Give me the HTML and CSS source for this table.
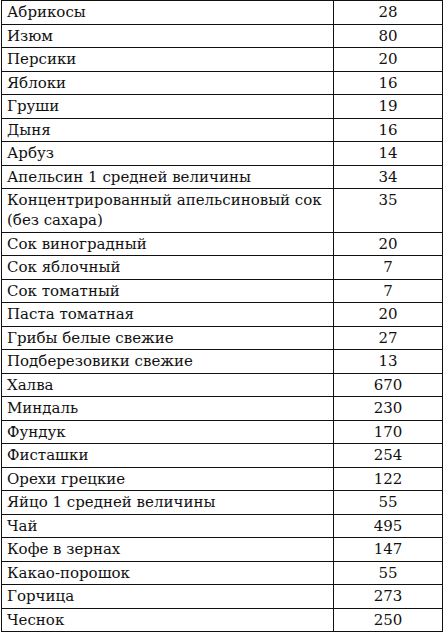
FILE: index.html
```html
<!DOCTYPE html>
<html lang="ru">
<head>
<meta charset="utf-8">
<link rel="stylesheet" href="styles.css">
</head>
<body>
<table class="tbl">
<tbody>
<tr><td class="name">Абрикосы</td><td class="val">28</td></tr>
<tr><td class="name">Изюм</td><td class="val">80</td></tr>
<tr><td class="name">Персики</td><td class="val">20</td></tr>
<tr><td class="name">Яблоки</td><td class="val">16</td></tr>
<tr><td class="name">Груши</td><td class="val">19</td></tr>
<tr><td class="name">Дыня</td><td class="val">16</td></tr>
<tr><td class="name">Арбуз</td><td class="val">14</td></tr>
<tr><td class="name">Апельсин 1 средней величины</td><td class="val">34</td></tr>
<tr><td class="name"><span class="line">Концентрированный апельсиновый сок</span><br>(без сахара)</td><td class="val">35</td></tr>
<tr><td class="name">Сок виноградный</td><td class="val">20</td></tr>
<tr><td class="name">Сок яблочный</td><td class="val">7</td></tr>
<tr><td class="name">Сок томатный</td><td class="val">7</td></tr>
<tr><td class="name">Паста томатная</td><td class="val">20</td></tr>
<tr><td class="name">Грибы белые свежие</td><td class="val">27</td></tr>
<tr><td class="name">Подберезовики свежие</td><td class="val">13</td></tr>
<tr><td class="name">Халва</td><td class="val">670</td></tr>
<tr><td class="name">Миндаль</td><td class="val">230</td></tr>
<tr><td class="name">Фундук</td><td class="val">170</td></tr>
<tr><td class="name">Фисташки</td><td class="val">254</td></tr>
<tr><td class="name">Орехи грецкие</td><td class="val">122</td></tr>
<tr><td class="name">Яйцо 1 средней величины</td><td class="val">55</td></tr>
<tr><td class="name">Чай</td><td class="val">495</td></tr>
<tr><td class="name">Кофе в зернах</td><td class="val">147</td></tr>
<tr><td class="name">Какао-порошок</td><td class="val">55</td></tr>
<tr><td class="name">Горчица</td><td class="val">273</td></tr>
<tr><td class="name">Чеснок</td><td class="val">250</td></tr>
</tbody>
</table>
</body>
</html>
```
FILE: styles.css
```css
html, body {
  margin: 0;
  padding: 0;
  background: #ffffff;
}
body {
  padding: 0 0 0 1px;
}
.tbl {
  border-collapse: collapse;
  width: 442px;
  table-layout: fixed;
  font-family: "DejaVu Serif", "Liberation Serif", serif;
  font-size: 15px;
  line-height: 20px;
  color: #111111;
}
.tbl td {
  border: 1.5px solid #111111;
  padding: 1px 0 1.5px 0;
  vertical-align: top;
}
.name {
  width: 326px;
  padding-left: 5px !important;
}
.line {
  white-space: nowrap;
}
.val {
  text-align: center;
}
```
